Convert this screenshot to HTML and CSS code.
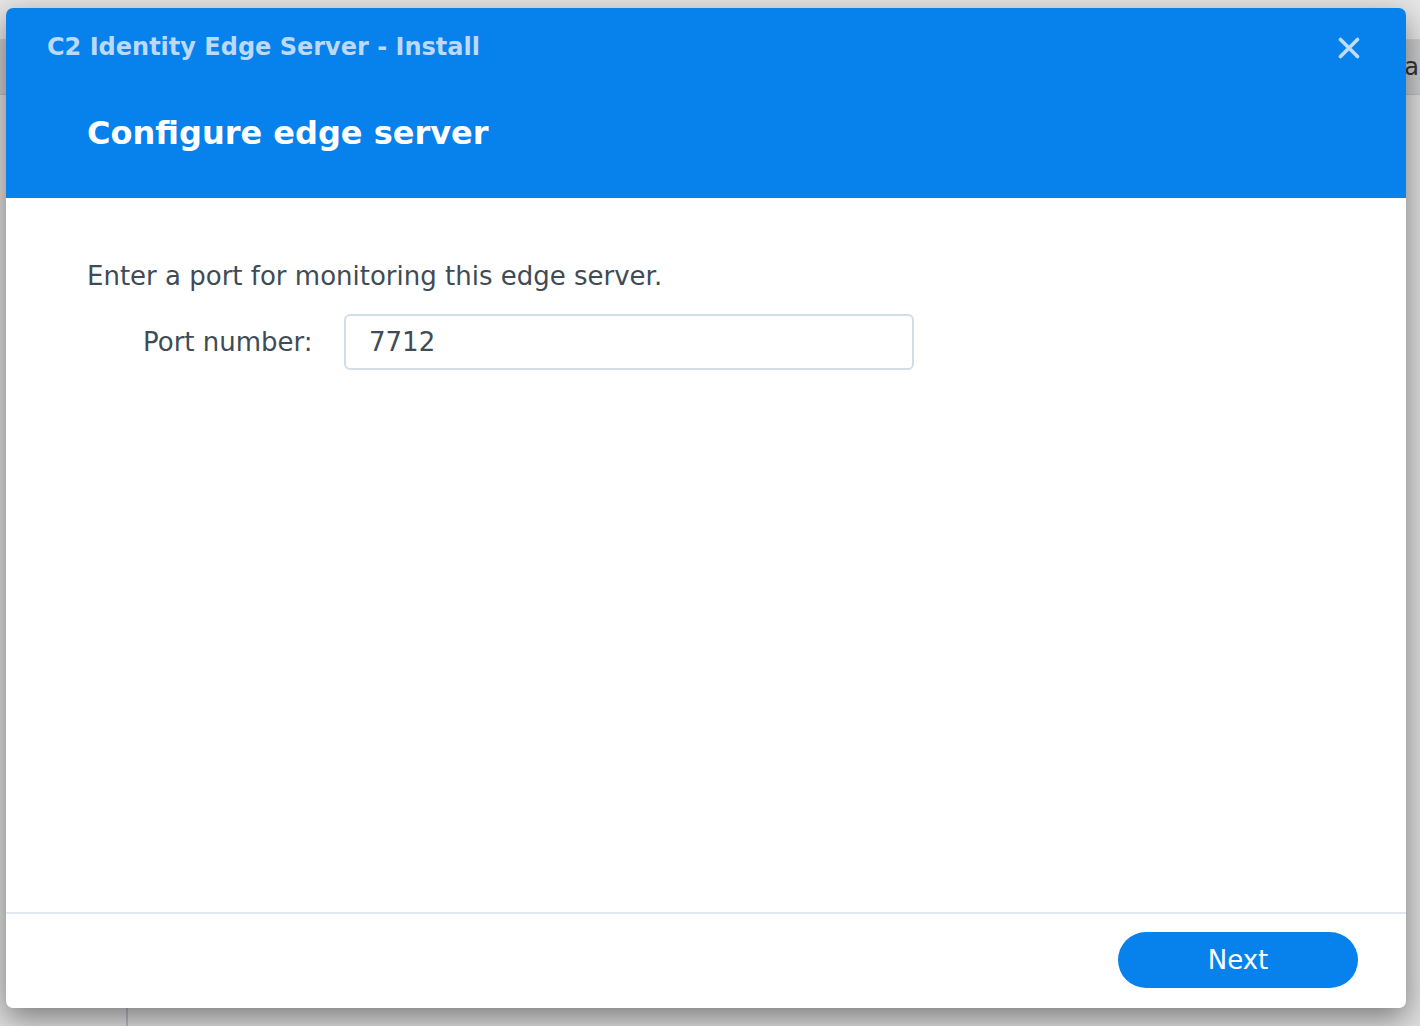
FILE: index.html
```html
<!DOCTYPE html>
<html>
<head>
<meta charset="utf-8">
<link rel="stylesheet" href="styles.css">
</head>
<body>
<div class="backdrop">
  <div class="bg-top"></div>
  <div class="bg-bar"><span class="bg-bar-text">Qua</span></div>
  <div class="bg-main"><div class="bg-side"></div></div>
</div>
<div class="dialog">
  <div class="dlg-header">
    <div class="dlg-titlebar">
      <span class="dlg-title">C2 Identity Edge Server - Install</span>
      <button class="dlg-close" aria-label="Close">
        <svg width="22" height="22" viewBox="0 0 22 22"><path d="M2.5 2.5 L19.5 19.5 M19.5 2.5 L2.5 19.5" stroke="#c4dcfb" stroke-width="3.6" stroke-linecap="round"/></svg>
      </button>
    </div>
    <h1 class="dlg-heading">Configure edge server</h1>
  </div>
  <div class="dlg-body">
    <p class="intro">Enter a port for monitoring this edge server.</p>
    <div class="field-row">
      <label class="field-label">Port number:</label>
      <div class="field-input">7712</div>
    </div>
  </div>
  <div class="dlg-footer">
    <button class="btn-next">Next</button>
  </div>
</div>
</body>
</html>
```
FILE: styles.css
```css
html, body { margin: 0; padding: 0; }
body {
  width: 1420px;
  height: 1026px;
  overflow: hidden;
  background: #e9e9e9;
  position: relative;
  font-family: "DejaVu Sans", Verdana, sans-serif;
}
.backdrop {
  display: flex;
  flex-direction: column;
  height: 1026px;
}
.bg-top { height: 40px; background: #e6e6e6; border-bottom: 1px solid #cfcfcf; box-sizing: border-box; }
.bg-bar {
  height: 55px;
  background: #c9cbcd;
  border-bottom: 1px solid #bdbdbd;
  box-sizing: border-box;
  display: flex;
  justify-content: flex-end;
  align-items: center;
  overflow: hidden;
}
.bg-bar-text { font-size: 24px; color: #333; margin-right: 1px; white-space: nowrap; }
.bg-main { flex: 1; background: #dedede; position: relative; }
.bg-side { position: absolute; left: 126px; top: 0; bottom: 0; width: 2px; background: #b9bcc4; }

.dialog {
  position: absolute;
  left: 6px;
  top: 8px;
  width: 1400px;
  height: 1000px;
  background: #fff;
  border-radius: 7px;
  box-shadow: 0 10px 30px rgba(0,0,0,0.45);
  display: flex;
  flex-direction: column;
  overflow: hidden;
}
.dlg-header {
  background: #0782ec;
  height: 190px;
  flex: none;
  box-sizing: border-box;
  padding: 0 46px 0 41px;
}
.dlg-titlebar {
  height: 80px;
  display: flex;
  align-items: flex-start;
  justify-content: space-between;
}
.dlg-title {
  font-weight: bold;
  font-size: 24px;
  color: #bcd8fb;
  margin-top: 25px;
  white-space: nowrap;
}
.dlg-close {
  background: none;
  border: 0;
  padding: 0;
  margin-top: 29px;
  width: 22px;
  height: 22px;
  display: flex;
}
.dlg-heading {
  margin: 26px 0 0 40px;
  font-weight: bold;
  font-size: 32px;
  color: #fff;
  line-height: 1.2;
  white-space: nowrap;
}
.dlg-body {
  flex: 1;
  padding: 58px 0 0 81px;
  color: #414b55;
}
.intro {
  margin: 0;
  font-size: 26px;
  line-height: 40px;
  white-space: nowrap;
}
.field-row {
  display: flex;
  align-items: center;
  margin-top: 18px;
}
.field-label {
  width: 202px;
  box-sizing: border-box;
  padding-left: 56px;
  font-size: 26px;
  white-space: nowrap;
}
.field-input {
  margin-left: 55px;
  width: 570px;
  height: 56px;
  box-sizing: border-box;
  border: 2px solid #d3dde8;
  border-radius: 6px;
  padding-left: 23px;
  font-size: 26px;
  display: flex;
  align-items: center;
  color: #414b55;
}
.dlg-footer {
  flex: none;
  height: 96px;
  box-sizing: border-box;
  border-top: 2px solid #e3e8f0;
  display: flex;
  justify-content: flex-end;
  align-items: flex-start;
  padding: 18px 48px 0 0;
}
.btn-next {
  width: 240px;
  height: 56px;
  border: 0;
  border-radius: 28px;
  background: #0782ec;
  color: #fff;
  font-family: "DejaVu Sans", Verdana, sans-serif;
  font-size: 26px;
}
```
